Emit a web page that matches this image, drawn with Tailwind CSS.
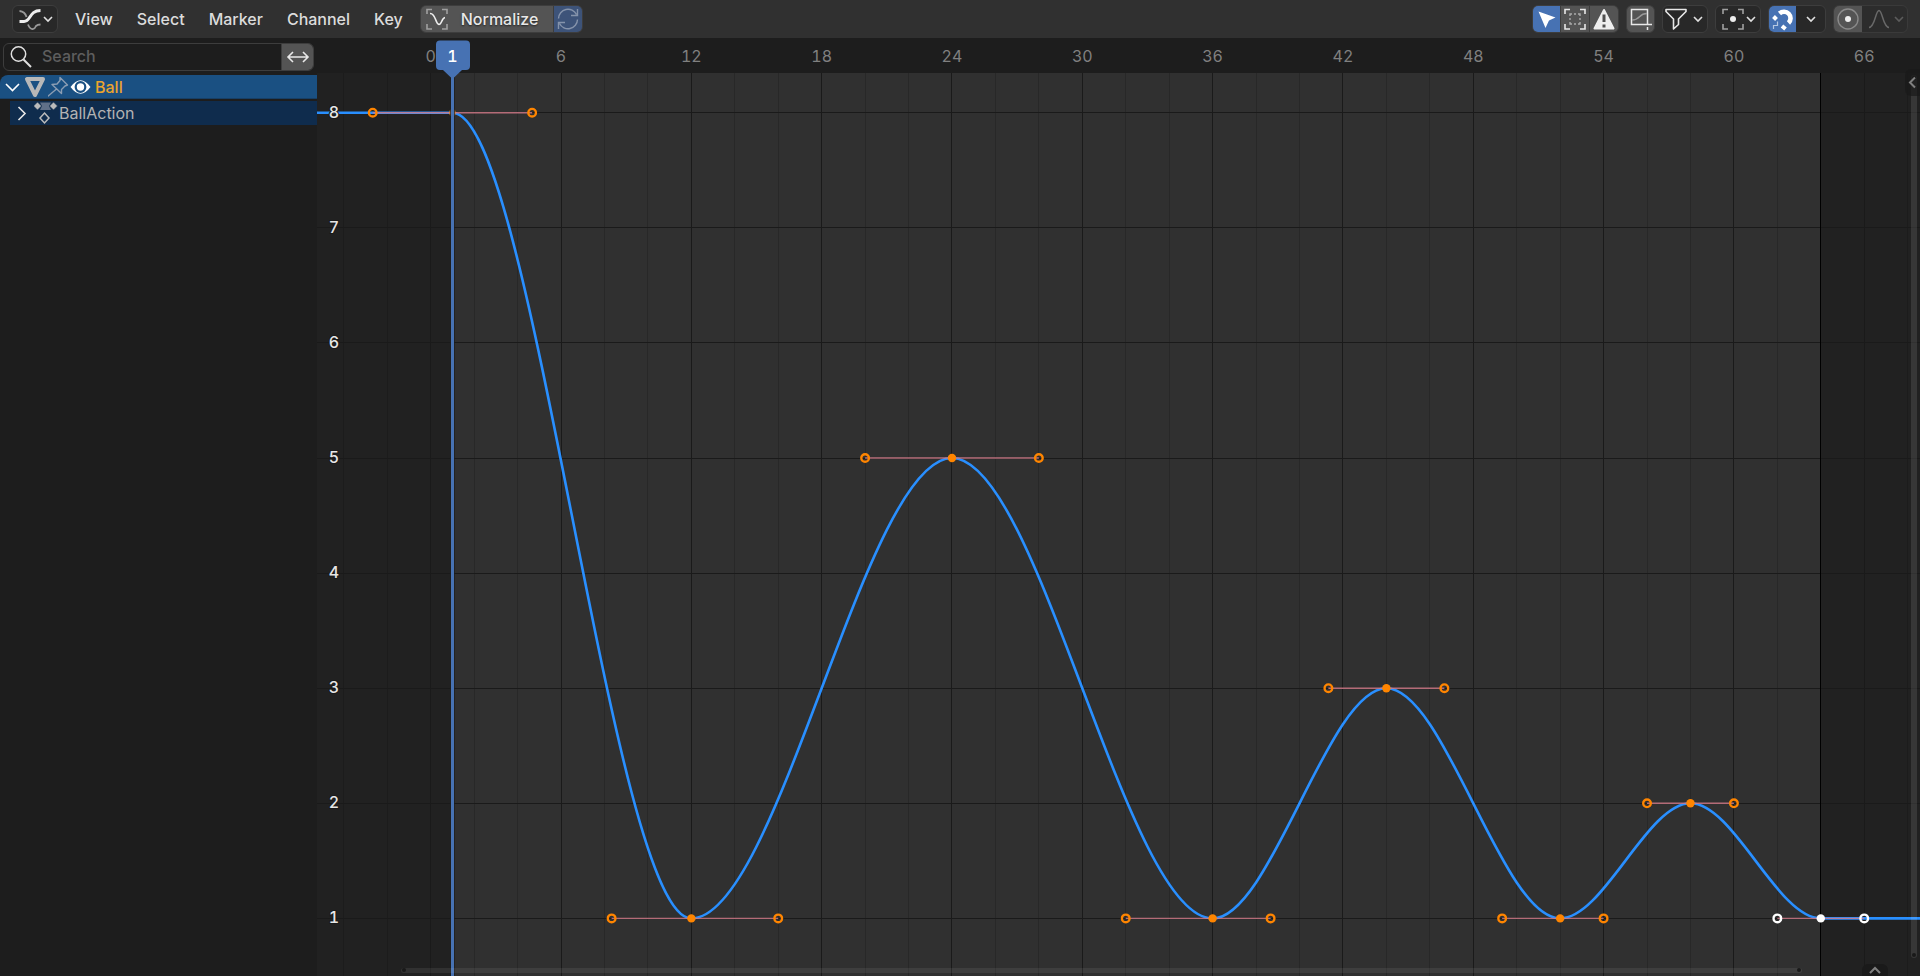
<!DOCTYPE html>
<html lang="en">
<head>
<meta charset="utf-8">
<title>Graph Editor</title>
<script src="https://cdn.jsdelivr.net/npm/@tailwindcss/browser@4"></script>
</head>
<body class="flex h-screen flex-col overflow-hidden bg-[#1d1d1d] font-['Inter',sans-serif] text-base font-medium text-[#dcdcdc]">

<header class="flex h-[38px] shrink-0 items-center bg-[#303030] pr-3 pl-3 leading-none">
  <button aria-label="Editor type" class="flex h-7 w-[46px] shrink-0 items-center rounded-md border border-[#3d3d3d] bg-[#282828]">
    <svg class="ml-[5px] h-6 w-6 shrink-0" viewBox="0 0 24 24" fill="none">
      <path d="M1.500 4Q7 4.500 8.500 10M10 17.500q2 5 5 4.500q2 -.5 3 -3q1.500 -1.500 4.500 -1.500" stroke="#999" stroke-width="1.800"/>
      <path d="M1.500 14.500H6C13 14.500 11 3.500 22.500 3.500" stroke="#eee" stroke-width="3"/>
    </svg>
    <svg class="h-2 w-3 shrink-0" viewBox="0 0 12 8" fill="none" stroke="#e0e0e0" stroke-width="1.600"><path d="M2 2l4 4 4-4"/></svg>
  </button>
  <nav class="ml-[5px] flex items-center [text-shadow:0_1px_2px_#000000a0]">
    <button class="px-3">View</button>
    <button class="px-3">Select</button>
    <button class="px-3">Marker</button>
    <button class="px-3">Channel</button>
    <button class="px-3">Key</button>
  </nav>
  <div class="ml-[5px] flex h-7 shrink-0 overflow-hidden rounded-md border border-[#3d3d3d] bg-[#3d3d3d]">
    <button aria-pressed="false" class="flex w-[132px] items-center bg-[#545454] text-[#e8e8e8] [text-shadow:0_1px_2px_#000000a0]">
      <svg class="ml-1 h-6 w-6 shrink-0" viewBox="0 0 24 24" fill="none">
        <path d="M2 7V2.500H7M17 2.500h5V7M22 17v5h-5M7 22H2v-5" stroke="#a0a0a0" stroke-width="1.600"/>
        <path d="M5 6.500C11 6 10 17 14 17.500C17 17.500 16.500 11 20 10.500" stroke="#eee" stroke-width="1.600"/>
      </svg>
      <span class="ml-3">Normalize</span>
    </button>
    <button aria-label="Auto normalize" class="ml-px flex w-7 items-center justify-center bg-[#3d5379]">
      <svg class="h-6 w-6" viewBox="0 0 24 24" fill="none" stroke="#8593ab" stroke-width="1.400">
        <path d="M2.500 11.500A9.500 9.500 0 0 1 20.500 7.500M21.500 2V8.500H15M21.500 12.500A9.500 9.500 0 0 1 3.500 16.500M2.500 22V15.500H9"/>
      </svg>
    </button>
  </div>

  <div class="ml-auto flex h-7 shrink-0 overflow-hidden rounded-md border border-[#3d3d3d] bg-[#3d3d3d]">
    <button aria-label="Only show selected" class="flex w-[27px] items-center justify-center bg-[#4772b3]">
      <svg class="h-6 w-6" viewBox="0 0 24 24" fill="#fff"><path d="M3.500 4.500L20.500 10.500L14 13.500L10.500 21Z"/></svg>
    </button>
    <button aria-label="Show hidden" class="ml-px flex w-7 items-center justify-center bg-[#545454]">
      <svg class="h-6 w-6" viewBox="0 0 24 24" fill="none">
        <path d="M2 7V2.500H7M17 2.500h5V7M22 17v5h-5M7 22H2v-5" stroke="#e8e8e8" stroke-width="1.600"/>
        <path d="M7 9V7h2M11 7h2M15 7h2v2M17 11v2M17 15v2h-2M13 17h-2M9 17H7v-2M7 13v-2" stroke="#aaa" stroke-width="1.400"/>
      </svg>
    </button>
    <button aria-label="Only show errors" class="ml-px flex w-7 items-center justify-center bg-[#545454]">
      <svg class="h-6 w-6" viewBox="0 0 24 24"><path d="M12 3L21.500 21.500H2.500Z" fill="#eee" stroke="#eee" stroke-width="2" stroke-linejoin="round"/><path d="M12 7.500V15M12 17.500v3" stroke="#505050" stroke-width="3"/></svg>
    </button>
  </div>
  <button aria-label="Ghost curves" class="ml-[7px] flex h-7 w-[29px] shrink-0 items-center justify-center rounded-md border border-[#3d3d3d] bg-[#545454]">
    <svg class="h-6 w-6 shrink-0" viewBox="0 0 24 24" fill="none">
      <path d="M18.500 17.500V2.500H2.500V17.500H23M18.500 20v3" stroke="#e8e8e8" stroke-width="1.500"/>
      <path d="M3 13C12 13 9 6.500 18 6.500" stroke="#999" stroke-width="1.400"/>
    </svg>
  </button>
  <button aria-label="Filters" class="ml-[7px] flex h-7 w-[46px] shrink-0 items-center rounded-md border border-[#3d3d3d] bg-[#282828]">
    <svg class="ml-px h-6 w-6 shrink-0" viewBox="0 0 24 24" fill="none" stroke="#e8e8e8" stroke-width="1.600" stroke-linejoin="round"><path d="M2 2.500H22V4.500L14.500 12V17.500L9.500 22V12L2 4.500Z"/></svg>
    <svg class="ml-1 h-2 w-3 shrink-0" viewBox="0 0 12 8" fill="none" stroke="#e0e0e0" stroke-width="1.600"><path d="M2 2l4 4 4-4"/></svg>
  </button>
  <button aria-label="Pivot point" class="ml-[7px] flex h-7 w-[46px] shrink-0 items-center rounded-md border border-[#3d3d3d] bg-[#282828]">
    <svg class="ml-[5px] h-6 w-6 shrink-0" viewBox="0 0 24 24" fill="none">
      <path d="M2 7V2.500H7M17 2.500h5V7M22 17v5h-5M7 22H2v-5" stroke="#a0a0a0" stroke-width="1.600"/><circle cx="12" cy="12" r="3" fill="#eee"/>
    </svg>
    <svg class="h-2 w-3 shrink-0" viewBox="0 0 12 8" fill="none" stroke="#e0e0e0" stroke-width="1.600"><path d="M2 2l4 4 4-4"/></svg>
  </button>
  <div class="ml-[7px] flex h-7 w-[58px] shrink-0 overflow-hidden rounded-md border border-[#3d3d3d] bg-[#282828]">
    <button aria-label="Snap" class="flex w-[27px] shrink-0 items-center justify-center bg-[#4772b3]">
      <svg class="h-6 w-6" viewBox="0 0 24 24" fill="none">
        <path d="M8.500 6.500A6.500 6.500 0 1 1 17.500 16" stroke="#fff" stroke-width="4.600"/>
        <path d="M2.500 9.500L5.500 12.500M11 19L14.500 22" stroke="#fff" stroke-width="4"/>
        <path d="M2.500 22V18.500H6.500V14.500" stroke="#b5c7e1" stroke-width="1.200"/>
      </svg>
    </button>
    <button aria-label="Snap to" class="flex grow items-center justify-center">
      <svg class="h-2 w-3" viewBox="0 0 12 8" fill="none" stroke="#e0e0e0" stroke-width="1.600"><path d="M2 2l4 4 4-4"/></svg>
    </button>
  </div>
  <div class="ml-[7px] flex h-7 w-[75px] shrink-0 overflow-hidden rounded-md border border-[#3a3a3a] bg-[#2c2c2c]">
    <button aria-label="Proportional editing" class="flex w-7 shrink-0 items-center justify-center bg-[#545454]">
      <svg class="h-6 w-6" viewBox="0 0 24 24" fill="none"><circle cx="12" cy="12" r="10" stroke="#8a8a8a" stroke-width="1.400"/><circle cx="12" cy="12" r="3" fill="#eee"/></svg>
    </button>
    <button aria-label="Proportional falloff" disabled class="flex grow items-center">
      <svg class="ml-[5px] h-6 w-6 shrink-0" viewBox="0 0 24 24" fill="none" stroke="#696969" stroke-width="1.500"><path d="M2 20.500C8 20.500 8.500 3.500 12 3.500S16 20.500 22 20.500"/></svg>
      <svg class="ml-[2px] h-2 w-3 shrink-0" viewBox="0 0 12 8" fill="none" stroke="#5c5c5c" stroke-width="1.600"><path d="M2 2l4 4 4-4"/></svg>
    </button>
  </div>
</header>

<div class="flex min-h-0 grow">
  <aside class="w-[317px] shrink-0">
    <div class="mt-[5px] ml-[3px] flex h-7 w-[311px] overflow-hidden rounded-md border border-[#3d3d3d]">
      <label for="search" class="flex w-[38px] shrink-0 items-center pl-[6px]">
        <svg class="h-6 w-6" viewBox="0 0 24 24" fill="none" stroke="#e0e0e0"><circle cx="8.500" cy="9" r="7.200" stroke-width="1.500"/><path d="M13.500 14.500L21 22" stroke-width="2"/></svg>
      </label>
      <input id="search" type="text" placeholder="Search" class="min-w-0 grow bg-transparent pb-[2px] leading-none outline-none placeholder:text-[#5e5e5e]">
      <button aria-label="Invert filter" class="flex w-8 shrink-0 items-center justify-center border-l border-[#3d3d3d] bg-[#545454]">
        <svg class="h-6 w-6" viewBox="0 0 24 24" fill="none" stroke="#e8e8e8" stroke-width="1.600"><path d="M2.500 12H21.500M7 7L2 12L7 17M17 7L22 12L17 17"/></svg>
      </button>
    </div>
    <ul class="mt-1 leading-6 font-normal">
      <li class="flex h-6 items-center rounded-tl-lg border-b border-[#173f66] bg-[#1a5082]">
        <button aria-label="Collapse Ball" class="flex w-6 shrink-0 justify-center"><svg class="h-6 w-6" viewBox="0 0 24 24" fill="none" stroke="#fff" stroke-width="1.600"><path d="M6 9L12.500 15.500L19 9"/></svg></button>
        <svg class="h-6 w-6 shrink-0" viewBox="0 0 24 24" fill="none" stroke="#b8b8b8" stroke-width="4" stroke-linejoin="round"><path d="M3 4H19L11 20Z"/></svg>
        <button aria-label="Pin" class="shrink-0"><svg class="block h-6 w-[22px]" viewBox="0 0 22 24" fill="none" stroke="#8b9db3" stroke-width="1.400" stroke-linejoin="round"><path d="M12 2.500L19.500 10L17 11L13.500 14.500L13.500 18.500L4 9.500L9 9L12 5.500Z M8.500 14L-1 22"/></svg></button>
        <button aria-label="Visible" class="shrink-0"><svg class="block h-6 w-6" viewBox="0 0 24 24"><path d="M.5 12Q10.500 -1.500 20.500 12Q10.500 25.500 .5 12Z" fill="#fff"/><circle cx="10.500" cy="12" r="4.800" fill="none" stroke="#1a5082" stroke-width="2.200"/></svg></button>
        <span class="ml-px font-medium text-[#eaa42e]">Ball</span>
      </li>
      <li class="mt-[2px] ml-[10px] flex h-6 items-center bg-[#0f2c4d]">
        <button aria-label="Expand BallAction" class="shrink-0"><svg class="block h-6 w-6" viewBox="0 0 24 24" fill="none" stroke="#e8e8e8" stroke-width="1.600"><path d="M8.500 6L15 12.500L8.500 19"/></svg></button>
        <svg class="h-6 w-[25px] shrink-0" viewBox="0 0 25 24">
          <path d="M6 1.500H17L15 5L17 9H6L8 5Z" fill="#607088"/>
          <path d="M3.500 1L7.500 5L3.500 9L-0.500 5ZM19.500 1L23.500 5L19.500 9L15.500 5Z" fill="#bbb" stroke="#0f2c4d" stroke-width=".6"/>
          <path d="M10.500 12L15 17L10.500 22L6 17Z" fill="none" stroke="#bbb" stroke-width="1.500"/>
        </svg>
        <span class="text-[#b3b3b3]">BallAction</span>
      </li>
    </ul>
  </aside>

  <main class="relative min-w-0 grow overflow-hidden">
    <svg id="graph" role="img" aria-label="Animation curve" class="absolute inset-0 h-full w-full font-['Inter',sans-serif] text-base font-normal tabular-nums"></svg>
    <div class="absolute top-[37px] right-[3px] bottom-[18px] w-[6px] rounded-full bg-white/10">
      <span class="absolute top-px left-px h-1 w-1 rounded-full bg-[#191919]"></span><span class="absolute bottom-px left-px h-1 w-1 rounded-full bg-[#191919]"></span>
    </div>
    <div class="absolute right-[118px] bottom-[3px] left-[84px] h-[5px] rounded-full bg-white/7">
      <span class="absolute top-0 left-px h-1 w-1 rounded-full bg-[#191919]"></span><span class="absolute top-0 right-px h-1 w-1 rounded-full bg-[#191919]"></span>
    </div>
    <button aria-label="Show sidebar" class="absolute top-[31px] right-0 h-[27px] w-[15px] rounded-l-md bg-[#1a1a1a]/70">
      <svg class="h-full w-full" viewBox="0 0 15 27" fill="none" stroke="#808080" stroke-width="2"><path d="M10 8.500L5 13.500L10 18.500"/></svg>
    </button>
    <button aria-label="Show playback controls" class="absolute right-8 bottom-0 h-3 w-[26px] rounded-t-md bg-[#1a1a1a]">
      <svg class="h-full w-full" viewBox="0 0 26 12" fill="none" stroke="#808080" stroke-width="2"><path d="M8 9L13 4L18 9"/></svg>
    </button>
  </main>
</div>

<script>
const svg = document.getElementById('graph');
const X = f => 113.7 + 21.72 * f;
const Y = v => 880.4 - (v - 1) * 115.1;
const add = (tag, attrs, text) => {
  const el = document.createElementNS('http://www.w3.org/2000/svg', tag);
  for (const k in attrs) el.setAttribute(k, attrs[k]);
  if (text !== undefined) el.textContent = text;
  svg.append(el);
};
// frame, value, left handle frame, right handle frame
const keys = [
  [1, 8, -2.67, 4.67], [12, 1, 8.33, 16], [24, 5, 20, 28], [36, 1, 32, 38.67],
  [44, 3, 41.33, 46.67], [52, 1, 49.33, 54], [58, 2, 56, 60], [64, 1, 62, 66]
];

add('rect', {x: 0, y: 35, width: '100%', height: '100%', fill: '#212121'});
add('rect', {x: 136, y: 35, width: 1368, height: '100%', fill: '#303030'});
for (let f = -4; f <= 68; f += 2)
  add('rect', {x: Math.floor(X(f)), y: 35, width: 1, height: '100%', fill: f % 6 ? '#000' : '#1a1a1a', 'fill-opacity': f % 6 ? 0.15 : 1});
for (let v = 1; v <= 8; v++)
  add('rect', {x: 0, y: Math.floor(Y(v)), width: '100%', height: 1, fill: '#1a1a1a'});
add('rect', {x: 1503, y: 35, width: 1, height: '100%', fill: '#000'});
for (let f = 0; f <= 66; f += 6)
  add('text', {x: X(f), y: 24, 'text-anchor': 'middle', fill: '#808080'}, f);

let d = `M0 ${Y(8)}H${X(1)}`;
for (let i = 1; i < keys.length; i++) {
  const [, v0, , r] = keys[i - 1], [f, v, l] = keys[i];
  d += `C${X(r)} ${Y(v0)} ${X(l)} ${Y(v)} ${X(f)} ${Y(v)}`;
}
add('path', {d: d + 'H6000', fill: 'none', stroke: '#298fff', 'stroke-width': 2.6});
for (const [f, v, l, r] of keys) {
  const color = f === 64 ? '#fff' : '#ff8500';
  add('path', {d: `M${X(l)} ${Y(v)}H${X(r)}`, stroke: '#d07a88', 'stroke-width': 1.4, 'stroke-opacity': 0.85});
  for (const h of [l, r])
    add('circle', {cx: X(h), cy: Y(v), r: 3.8, fill: 'none', stroke: color, 'stroke-width': 2.4});
  add('circle', {cx: X(f), cy: Y(v), r: f === 1 ? 3.4 : 4.2, fill: color, 'fill-opacity': f === 1 ? 0.6 : 1});
}
for (let v = 1; v <= 8; v++)
  add('text', {x: 17, y: Y(v) + 5, 'text-anchor': 'middle', 'font-weight': 500, fill: '#e6e6e6', stroke: '#1a1a1a', 'stroke-width': 2, 'paint-order': 'stroke'}, v);

add('rect', {x: 133, y: 35, width: 5, height: '100%', fill: '#1c1c1c', 'fill-opacity': 0.7});
add('rect', {x: 134, y: 35, width: 3, height: '100%', fill: '#4772b3'});
add('path', {d: 'M123 2.500H149Q153 2.500 153 6.500V28Q153 32 149 32H145L135.500 41L126 32H123Q119 32 119 28V6.500Q119 2.500 123 2.500Z', fill: '#4772b3'});
add('text', {x: 135.5, y: 24, 'text-anchor': 'middle', 'font-weight': 500, fill: '#fff'}, 1);
</script>
</body>
</html>
